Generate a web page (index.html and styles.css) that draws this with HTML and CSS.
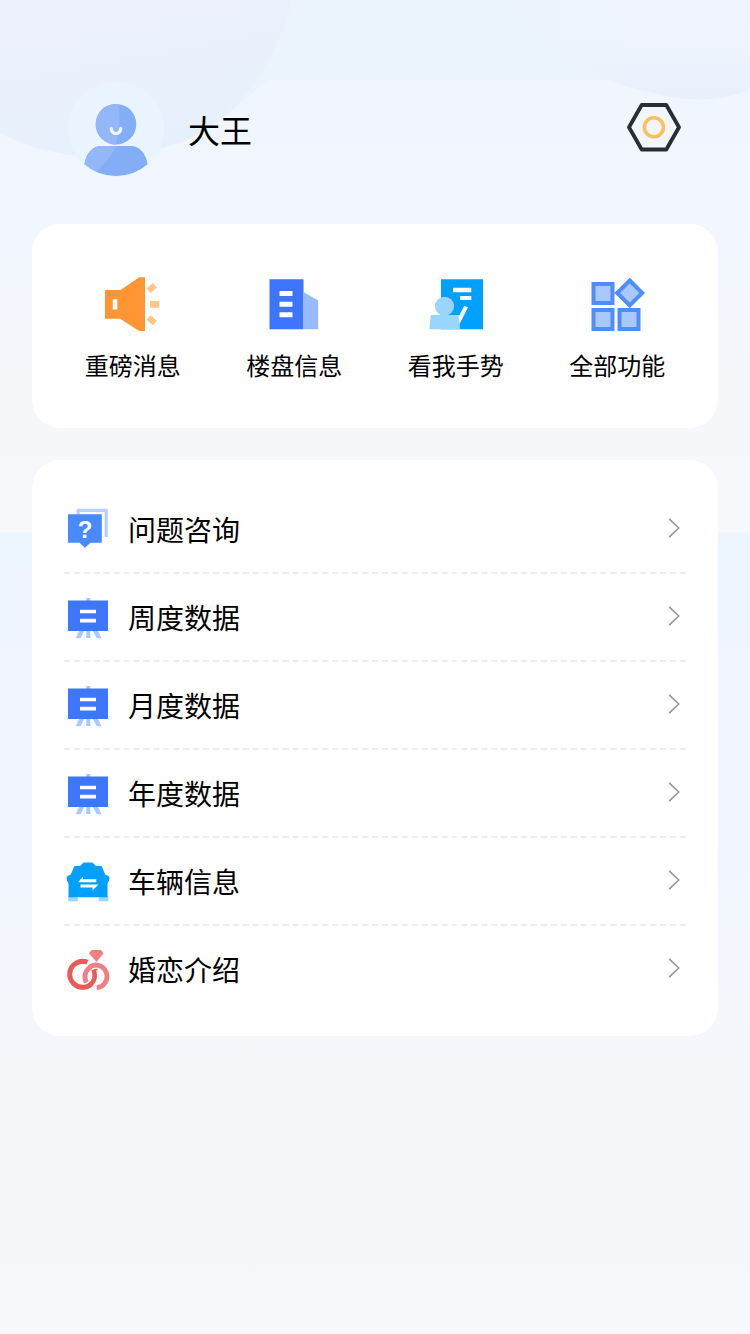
FILE: index.html
```html
<!DOCTYPE html>
<html lang="zh-CN">
<head>
<meta charset="utf-8">
<title>大王</title>
<link rel="stylesheet" href="styles.css">
</head>
<body>
<svg class="backdrop" viewBox="0 0 750 224" aria-hidden="true">
  <defs>
    <linearGradient id="fade" x1="0" y1="0" x2="0" y2="1"><stop offset="0" stop-color="#eff4fd"/><stop offset="1" stop-color="#f2f6ff"/></linearGradient>
    <linearGradient id="blob" x1="0" y1="0" x2=".35" y2="1"><stop offset="0" stop-color="#edf1fd"/><stop offset=".5" stop-color="#eaf1fc"/><stop offset="1" stop-color="#e6f0fc"/></linearGradient>
    <linearGradient id="blob2" x1="0" y1="0" x2="0" y2="1"><stop offset="0" stop-color="#eff4fd"/><stop offset=".6" stop-color="#edf3fd"/><stop offset="1" stop-color="#e8f0fc"/></linearGradient>
    <linearGradient id="edge" x1="0" y1="0" x2="1" y2="0"><stop offset="0" stop-color="#ebf3fd"/><stop offset=".6" stop-color="#ebf3fd" stop-opacity="0"/></linearGradient>
  </defs>
  <rect width="750" height="224" fill="url(#fade)"/>
  <path d="M0 0H750V80H268L230 112Q190 150 110 157Q48 158 0 133Z" fill="#ebf3fd"/>
  <path d="M0 0H292Q276 66 230 112Q190 150 110 157Q48 158 0 133Z" fill="url(#blob)"/>
  <path d="M510 0H750V90Q700 108 650 92Q570 78 510 0Z" fill="url(#blob2)"/>
  <path d="M510 0H750V80H560Q530 40 510 0Z" fill="url(#edge)"/>
</svg>
<main class="page">
  <header class="profile">
    <svg class="avatar" viewBox="68 80 96 100">
      <circle cx="116" cy="129" r="48" fill="#e9f4fe"/>
      <circle cx="116" cy="124.2" r="20.3" fill="#83aef5"/>
      <path d="M116 103.900a20.300 20.300 0 0 0 0 40.600q5-20 3-40.400z" fill="#93b7f8"/>
      <path d="M111.200 128.500q.8 5 4.800 5t4.800-5" fill="none" stroke="#eff6ff" stroke-width="3.200" stroke-linecap="round"/>
      <path d="M84.500 164.300C86 153 93 146 101 146H131C139 146 146 153 147.500 164.300Q134 176 116 176T84.500 164.300Z" fill="#83aef5"/>
      <path d="M84.500 164.300C86 153 93 146 101 146H116Q110 160 96 171.500Q90 168.500 84.500 164.300Z" fill="#93b7f8"/>
    </svg>
    <h1 class="name">大王</h1>
    <svg class="settings" viewBox="626 99 56 56" fill="none">
      <path d="M641.700 105H666.300L679 127.200L666.300 149.500H641.700L629 127.200Z" stroke="#292e35" stroke-width="3.800" stroke-linejoin="round"/>
      <circle cx="653.900" cy="127.200" r="9.500" stroke="#fcc05c" stroke-width="3.600"/>
    </svg>
  </header>

  <nav class="card shortcuts">
    <a class="shortcut">
      <svg viewBox="103 275 60 60">
        <path fill="#ff9533" fill-rule="evenodd" d="M105 290H120.500L139.300 277.300H145V331H139.300L120 318.700H105ZM112.700 299.300V309.500H117.300V299.300Z"/>
        <g fill="#ffc589"><rect x="150" y="301" width="9.300" height="6.700"/><rect x="147.500" y="285" width="8.500" height="6" transform="rotate(-40 151.700 288)"/><rect x="147.500" y="317.300" width="8.500" height="6" transform="rotate(40 151.700 320.300)"/></g>
      </svg>
      <span>重磅消息</span>
    </a>
    <a class="shortcut">
      <svg viewBox="264.500 275 60 60">
        <path fill="#3d75ff" d="M270 279.300H304V329.300H270Z"/><path fill="#98bbff" d="M304 292L318.700 300.500V329.300H304Z"/>
        <path fill="#fff" d="M280 291h13v5h-13zM280 301.700h13v5h-13zM280 312.300h13v5h-13z"/>
      </svg>
      <span>楼盘信息</span>
    </a>
    <a class="shortcut">
      <svg viewBox="426 275 60 60">
        <path fill="#00a0ff" d="M441 279.300H483V329.300H441Z"/>
        <path fill="#fff" d="M453 287.700h18.300v4.500H453zM460 296h11.300v4H460z"/>
        <circle cx="444.500" cy="306.300" r="9.600" fill="#99d5ff"/><path fill="#99d5ff" d="M430.700 315H459.500L460 329.300H429.300Z"/>
        <path fill="#fff" d="M464.300 305.700L468 307.300L459.600 324L458.500 317Z"/>
      </svg>
      <span>看我手势</span>
    </a>
    <a class="shortcut">
      <svg viewBox="587.500 275 60 60" fill="#a8c8ff" stroke="#4f8dfd" stroke-width="4">
        <path d="M594 284h19v19h-19zM594 310h19v19h-19zM620 310h19v19h-19zM630.200 280.500L642.700 293L630.200 305.500L617.700 293Z"/>
      </svg>
      <span>全部功能</span>
    </a>
  </nav>

  <svg class="symbols" aria-hidden="true">
    <symbol id="board" viewBox="66 594 44 44" overflow="visible">
      <path fill="#a9c8ff" d="M86.300 598h4v3h-4zM79 631h5l-3.500 7.300h-4.700zM86.300 631h4v7h-4zM93 631h5l3.500 7.300h-4.700z"/>
      <path fill="#3d77ff" d="M68 600.400h40v30.700H68z"/><path fill="#fff" d="M80 609.700h16v3.600H80zM80 618.800h16v3.700H80z"/>
    </symbol>
    <symbol id="chevron" viewBox="0 0 12 22"><path d="M1.200 1.800L10.600 11L1.200 20.200" fill="none" stroke="#999" stroke-width="1.700"/></symbol>
  </svg>

  <section class="card menu">
    <a class="row">
      <svg class="icon" viewBox="66 506 44 44">
        <path d="M76.700 510.300H106.200V537" fill="none" stroke="#b5d2ff" stroke-width="3.200"/><path d="M78.200 510V514.500" stroke="#b5d2ff" stroke-width="3"/>
        <path fill="#4a8aff" d="M68 514.300H101.800V542.700H90.500L85 547.700L79.500 542.700H68Z"/>
        <text class="question" x="85" y="538" text-anchor="middle">?</text>
      </svg>
      <span class="label">问题咨询</span><svg class="arrow"><use href="#chevron"/></svg>
    </a>
    <a class="row"><svg class="icon"><use href="#board"/></svg><span class="label">周度数据</span><svg class="arrow"><use href="#chevron"/></svg></a>
    <a class="row"><svg class="icon"><use href="#board"/></svg><span class="label">月度数据</span><svg class="arrow"><use href="#chevron"/></svg></a>
    <a class="row"><svg class="icon"><use href="#board"/></svg><span class="label">年度数据</span><svg class="arrow"><use href="#chevron"/></svg></a>
    <a class="row">
      <svg class="icon" viewBox="66 858 44 44">
        <path fill="#98d6ff" d="M68.300 896h9.500v5.300h-9.500zM98.800 896h9.500v5.300h-9.500z"/>
        <path fill="#00a0ff" d="M83.500 862.500H92.500L96 866H101.500L105.500 875Q109.500 875 109.500 878.500Q109.300 881.500 107.500 883V897.300H68.500V883Q66.700 881.500 66.700 878.500Q66.700 875 70.500 875L74.500 866H80Z"/>
        <path fill="#fff" d="M78 882.200L83 876.500V879.200H96.300V882.200ZM80.500 884.500H98.500L92.500 890.500V887.500H80.500Z"/>
      </svg>
      <span class="label">车辆信息</span><svg class="arrow"><use href="#chevron"/></svg>
    </a>
    <a class="row">
      <svg class="icon" viewBox="66 946 44 44" fill="none">
        <path fill="#f08084" d="M91.500 950H101L103.500 953.300L96.500 962L89 953.300Z"/>
        <path d="M87.500 962.200A13 13 0 1 0 94.800 969.500" stroke="#e95b56" stroke-width="5"/>
        <path d="M86.300 982.500Q82.500 974 88.800 968.300A10.700 11.200 0 1 1 96.800 987.500" stroke="#fff" stroke-width="6.600"/>
        <path d="M86.300 982.500Q82.500 974 88.800 968.300A10.700 11.200 0 1 1 96.800 987.500" stroke="#f08084" stroke-width="4.900"/>
        <path d="M94.500 971.200Q97.500 979 91.500 984" stroke="#fff" stroke-width="6.600"/>
        <path d="M93.500 969.500Q97.500 979.500 89 985.800" stroke="#e95b56" stroke-width="4.400"/>
      </svg>
      <span class="label">婚恋介绍</span><svg class="arrow"><use href="#chevron"/></svg>
    </a>
  </section>
</main>
</body>
</html>
```
FILE: styles.css
```css
* { box-sizing: border-box; }
body {
  margin: 0;
  min-height: 1334px;
  font-family: "Noto Sans CJK SC", sans-serif;
  color: #000;
  background: linear-gradient(#f2f6ff 224px, #f5f7fb 360px, #f7f8fb 532px, #ecf5fe 533px, #f0f5ff 660px, #f1f5fe 850px, #f5f7fb 1050px, #f5f7fb 1180px, #f7f8fc 1334px);
}
svg { display: block; }
.backdrop { position: absolute; top: 0; left: 0; width: 750px; height: 224px; }
.page { position: relative; width: 750px; padding: 0 32px; }
.profile { display: flex; height: 224px; padding: 80px 36px 44px; }
.avatar { width: 96px; height: 100px; }
.name { flex: 1; margin: 0 0 0 24px; font-size: 32px; font-weight: 400; line-height: 98px; }
.settings { width: 56px; height: 56px; margin-top: 19px; }
.card { border-radius: 28px; background: #fff; }
.shortcuts { display: grid; grid-template-columns: repeat(4, 1fr); height: 204px; padding: 51px 20px 0; }
.shortcut { display: flex; flex-direction: column; align-items: center; gap: 12px; font-size: 24px; line-height: 36px; }
.shortcut svg { width: 60px; height: 60px; }
.symbols { width: 0; height: 0; }
.menu { margin-top: 32px; padding: 26px 32px 22px; }
.row { display: flex; align-items: center; height: 88px; padding: 0 6px 2px 2px; border-bottom: 2px dashed #eee; }
.row:last-child { border-bottom-color: transparent; }
.icon { width: 44px; height: 44px; overflow: visible; }
.label { flex: 1; margin-left: 18px; padding-top: 2px; font-size: 28px; line-height: 40px; }
.arrow { width: 12px; height: 22px; }
.question { font: bold 24px "Liberation Sans", sans-serif; fill: #fff; }
```
